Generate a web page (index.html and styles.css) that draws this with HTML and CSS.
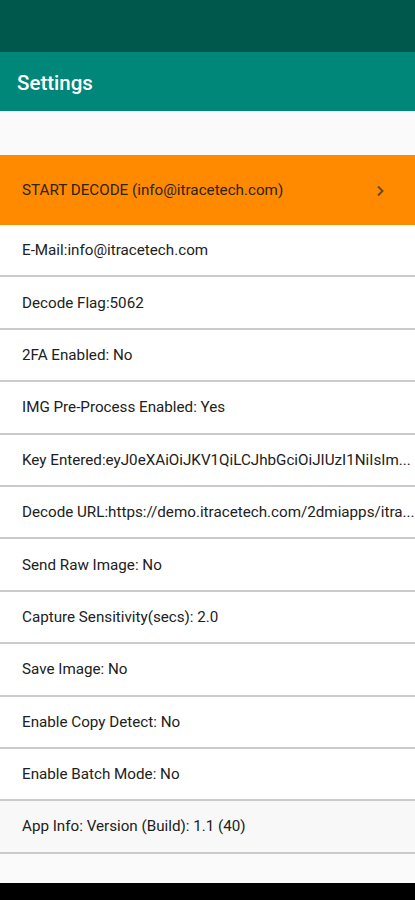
FILE: index.html
```html
<!DOCTYPE html>
<html lang="en">
<head>
  <meta charset="UTF-8">
  <title>Settings</title>
  <link rel="stylesheet" href="styles.css">
</head>
<body>
  <div class="status-bar"></div>
  <header class="toolbar">
    <h1>Settings</h1>
  </header>

  <div class="spacer"></div>

  <div class="start-row">
    <span>START DECODE (info@itracetech.com)</span>
    <svg class="chevron" width="10" height="12" viewBox="0 0 10 12">
      <path d="M3 1.5 L7.5 6 L3 10.5" fill="none" stroke="#6b4a1e" stroke-width="2"/>
    </svg>
  </div>

  <ul class="settings">
    <li>E-Mail:info@itracetech.com</li>
    <li>Decode Flag:5062</li>
    <li>2FA Enabled: No</li>
    <li>IMG Pre-Process Enabled: Yes</li>
    <li>Key Entered:eyJ0eXAiOiJKV1QiLCJhbGciOiJIUzI1NiIsIm...</li>
    <li>Decode URL:https://demo.itracetech.com/2dmiapps/itra...</li>
    <li>Send Raw Image: No</li>
    <li>Capture Sensitivity(secs): 2.0</li>
    <li>Save Image: No</li>
    <li>Enable Copy Detect: No</li>
    <li>Enable Batch Mode: No</li>
    <li class="info">App Info: Version (Build): 1.1 (40)</li>
  </ul>

  <div class="bottom-space"></div>
  <div class="nav-bar"></div>
</body>
</html>
```

FILE: styles.css
```css
body {
  margin: 0;
  font-family: Roboto, 'Liberation Sans', sans-serif;
  background-color: #fafafa;
  color: #212121;
  height: 900px;
  display: flex;
  flex-direction: column;
}

.status-bar {
  height: 52px;
  background-color: #00574c;
}

.toolbar {
  height: 59px;
  background-color: #00877a;
  display: flex;
  align-items: center;
  padding-left: 17px;
}

.toolbar h1 {
  margin: 0;
  color: #ffffff;
  font-size: 20.5px;
  font-weight: 500;
  padding-top: 2px;
}

.spacer {
  height: 44px;
  background-color: #fafafa;
}

.start-row {
  height: 70px;
  background-color: #ff8a00;
  display: flex;
  align-items: center;
  justify-content: space-between;
  padding: 0 30px 0 22px;
  font-size: 15.2px;
  color: #2e2210;
}

.chevron {
  margin-top: 1px;
}

.settings {
  list-style: none;
  margin: 0;
  padding: 0;
}

.settings li {
  box-sizing: border-box;
  height: 52.4px;
  display: flex;
  align-items: center;
  padding-left: 22px;
  font-size: 15.2px;
  background-color: #ffffff;
  border-bottom: 2px solid #cbcbcb;
  white-space: nowrap;
  overflow: hidden;
}

.settings li.info {
  background-color: #f8f8f8;
}

.bottom-space {
  flex: 1;
  background-color: #fafafa;
}

.nav-bar {
  height: 17px;
  background-color: #000000;
}
```
